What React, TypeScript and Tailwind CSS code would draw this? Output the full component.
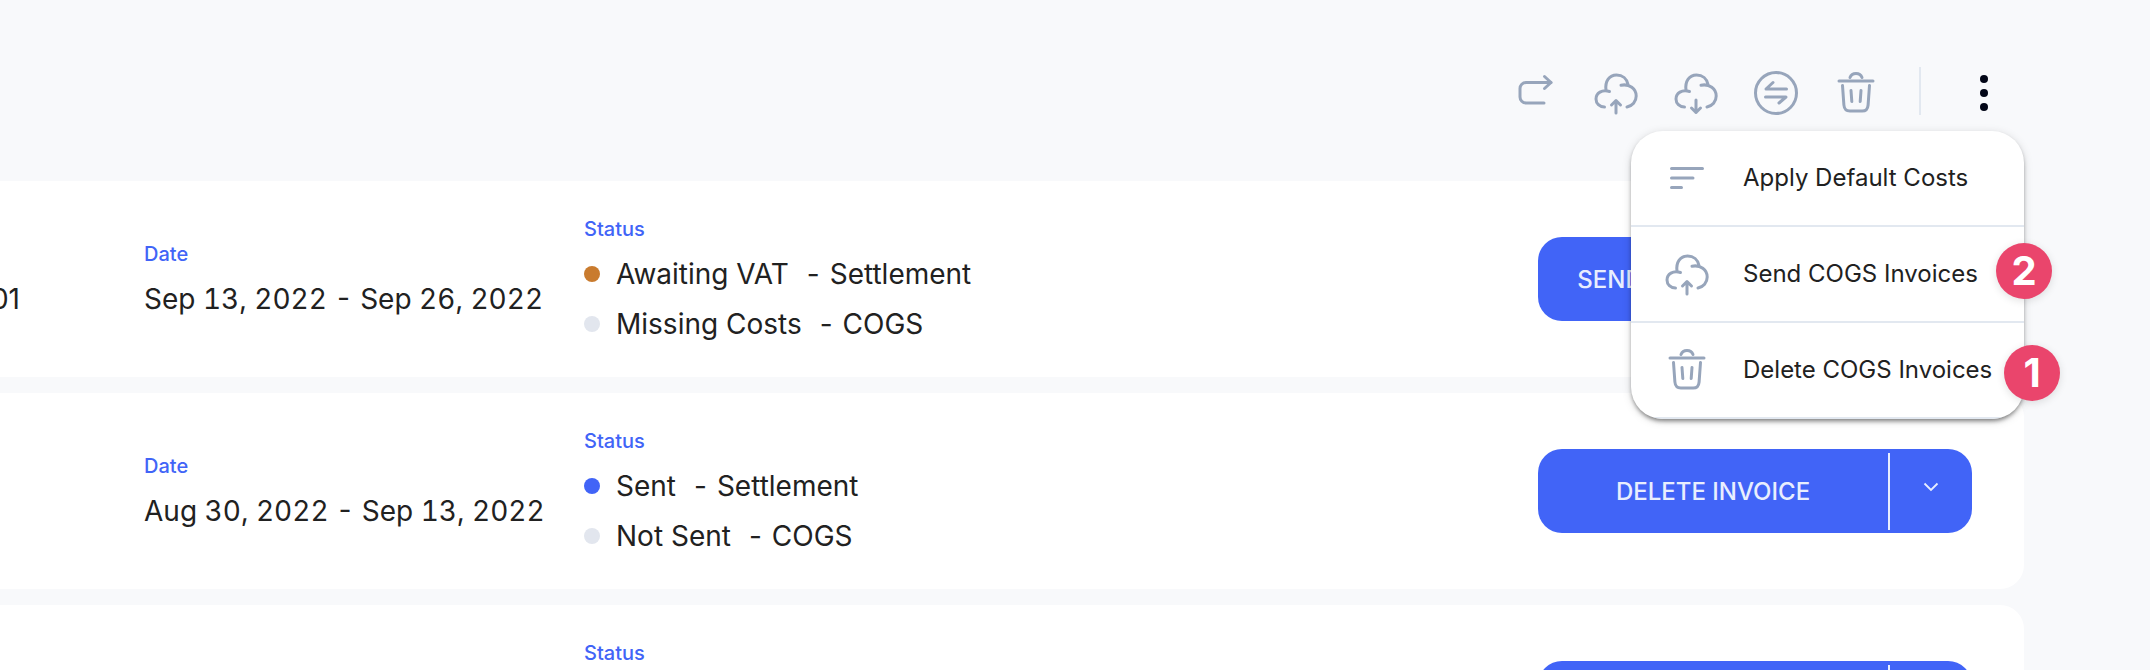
import type { ReactNode } from "react";

type StatusItem = { label: string; kind: string; dot: string };
type Invoice = { id: string; ref: string; date: string; action: string; statuses: StatusItem[] };

const INVOICES: Invoice[] = [
  {
    id: "a",
    ref: "01",
    date: "Sep 13, 2022 - Sep 26, 2022",
    action: "SEND DRAFT INVOICES",
    statuses: [
      { label: "Awaiting VAT", kind: "Settlement", dot: "bg-[#c97b2e]" },
      { label: "Missing Costs", kind: "COGS", dot: "bg-[#e2e6ee]" },
    ],
  },
  {
    id: "b",
    ref: "",
    date: "Aug 30, 2022 - Sep 13, 2022",
    action: "DELETE INVOICE",
    statuses: [
      { label: "Sent", kind: "Settlement", dot: "bg-[#4164f7]" },
      { label: "Not Sent", kind: "COGS", dot: "bg-[#e2e6ee]" },
    ],
  },
  {
    id: "c",
    ref: "",
    date: "",
    action: "DELETE INVOICE",
    statuses: [
      { label: "Sent", kind: "Settlement", dot: "bg-[#4164f7]" },
      { label: "Not Sent", kind: "COGS", dot: "bg-[#e2e6ee]" },
    ],
  },
];

function Icon({ children }: { children: ReactNode }) {
  return (
    <svg
      viewBox="0 0 48 48"
      className="size-12 shrink-0"
      fill="none"
      stroke="#97a5bb"
      strokeWidth="3"
      strokeLinecap="round"
      strokeLinejoin="round"
      aria-hidden="true"
    >
      {children}
    </svg>
  );
}

function ForwardIcon() {
  return (
    <Icon>
      <path d="M32 34H14a6 6 0 0 1-6-6v-8.500a6 6 0 0 1 6-6h25" />
      <path d="M32.500 7.500l6.500 6-6.500 6" />
    </Icon>
  );
}

const CLOUD =
  "M12.500 38C7.500 38 4 34.500 4 30c0-6 6-9.800 13.500-7.500M14 21.500C12.700 12 17.500 6 24.500 6c6 0 10.500 3.800 11.500 9.500M29 16.200c8.500-1.600 15.200 3.300 15.200 10.800 0 5.700-3.900 10-9.200 11";

function CloudUpIcon() {
  return (
    <Icon>
      <path d={CLOUD} />
      <path d="M24 44V32M19.500 36l4.500-4.500 4.500 4.500" />
    </Icon>
  );
}

function CloudDownIcon() {
  return (
    <Icon>
      <path d={CLOUD} />
      <path d="M24 31v12.500M19.500 39l4.500 4.500 4.500-4.500" />
    </Icon>
  );
}

function SwapIcon() {
  return (
    <Icon>
      <circle cx="24" cy="24" r="20.500" />
      <path d="M34.500 20H14l7-6.500M13.500 28H34l-7 6" />
    </Icon>
  );
}

function TrashIcon() {
  return (
    <Icon>
      <path d="M7 12h34M18 8.500c2-5.500 10-5.500 12 0M10.500 16.500l1.400 19.500c.4 4.500 2 6 6 6h12.200c4 0 5.600-1.500 6-6l1.400-19.500M19 21.500l.8 11M29 21.500l-.8 11" />
    </Icon>
  );
}

function LinesIcon() {
  return (
    <Icon>
      <path d="M8.500 14.500h31M8.500 24H30M8.500 33.500h10" />
    </Icon>
  );
}

const TOOLS = [
  { name: "Forward", icon: <ForwardIcon /> },
  { name: "Upload", icon: <CloudUpIcon /> },
  { name: "Download", icon: <CloudDownIcon /> },
  { name: "Convert", icon: <SwapIcon /> },
  { name: "Delete", icon: <TrashIcon /> },
];

const MENU = [
  { label: "Apply Default Costs", icon: <LinesIcon /> },
  { label: "Send COGS Invoices", icon: <CloudUpIcon /> },
  { label: "Delete COGS Invoices", icon: <TrashIcon /> },
];

function Badge({ children, className }: { children: ReactNode; className: string }) {
  return (
    <span
      className={`absolute flex size-14 items-center justify-center rounded-full bg-[#ea456c] text-[40px] leading-none font-bold text-white shadow-[0_2px_8px_rgba(0,0,0,0.12)] ${className}`}
    >
      {children}
    </span>
  );
}

function Toolbar() {
  return (
    <header className="relative z-10 flex items-start justify-end pt-[67px] pr-4">
      <div className="flex gap-8 pt-[2px]">
        {TOOLS.map((tool) => (
          <button key={tool.name} type="button" aria-label={tool.name}>
            {tool.icon}
          </button>
        ))}
      </div>
      <div className="mx-[39px] h-12 w-[2px] bg-[#e2e8f0]" />
      <button type="button" aria-label="More actions" className="pt-[2px]">
        <svg viewBox="0 0 48 48" className="size-12" fill="#020617" aria-hidden="true">
          <circle cx="24" cy="10" r="4" />
          <circle cx="24" cy="24" r="4" />
          <circle cx="24" cy="38" r="4" />
        </svg>
      </button>

      <div className="absolute top-[131px] right-0">
        <div className="w-[393px] overflow-hidden rounded-[32px] bg-white shadow-[0_3px_4px_-1px_rgba(0,0,0,0.45),0_2px_10px_rgba(0,0,0,0.15)]">
          {MENU.map((item) => (
            <button
              key={item.label}
              type="button"
              className="flex h-24 w-full items-center gap-8 border-b-2 border-[#e2e8f0] pl-8 text-2xl"
            >
              {item.icon}
              {item.label}
            </button>
          ))}
        </div>
        <Badge className="top-28 -right-7">2</Badge>
        <Badge className="top-[214px] -right-9">1</Badge>
      </div>
    </header>
  );
}

function InvoiceRow({ invoice }: { invoice: Invoice }) {
  return (
    <article className="flex h-[196px] items-center rounded-r-3xl bg-white pr-[52px]">
      <div className="flex w-36 shrink-0 flex-col gap-2">
        <div className="h-8" />
        <p className="flex h-[42px] w-5 items-center justify-end overflow-hidden text-[28px]">{invoice.ref}</p>
      </div>
      <div className="flex w-[440px] shrink-0 flex-col gap-2">
        <span className="text-xl leading-8 font-medium text-[#4164f7]">Date</span>
        <span className="h-[42px] text-[28px] leading-[42px] whitespace-nowrap tabular-nums">{invoice.date}</span>
      </div>
      <div className="flex flex-1 flex-col gap-2">
        <span className="text-xl leading-8 font-medium text-[#4164f7]">Status</span>
        {invoice.statuses.map((status) => (
          <div key={status.kind} className="flex items-center text-[28px] leading-[42px] whitespace-nowrap">
            <span className={`mr-4 size-4 rounded-full ${status.dot}`} />
            <span className="mr-[18px]">{status.label}</span>
            <span className="mr-[10px]">-</span>
            <span>{status.kind}</span>
          </div>
        ))}
      </div>
      <div className="flex h-[84px] w-[434px] shrink-0 items-center rounded-3xl bg-[#4164f7] text-[#e8eefe]">
        <button type="button" className="h-full flex-1 pt-[2px] text-2xl font-medium whitespace-nowrap">
          {invoice.action}
        </button>
        <div className="h-[77px] w-[2px] bg-[#e8eefe]" />
        <button type="button" aria-label="More" className="flex h-full w-[82px] items-center justify-center pb-2">
          <svg viewBox="0 0 16 10" className="h-[10px] w-4" fill="none" stroke="currentColor" strokeWidth="1.800" aria-hidden="true">
            <path d="M1.500 1.500L8 8l6.500-6.500" />
          </svg>
        </button>
      </div>
    </article>
  );
}

export default function App() {
  return (
    <div className="h-screen overflow-hidden bg-[#f8f9fb] pr-[126px] font-['Inter',sans-serif] text-[#212121]">
      <Toolbar />
      <main className="flex flex-col gap-4 pt-16">
        {INVOICES.map((invoice) => (
          <InvoiceRow key={invoice.id} invoice={invoice} />
        ))}
      </main>
    </div>
  );
}
